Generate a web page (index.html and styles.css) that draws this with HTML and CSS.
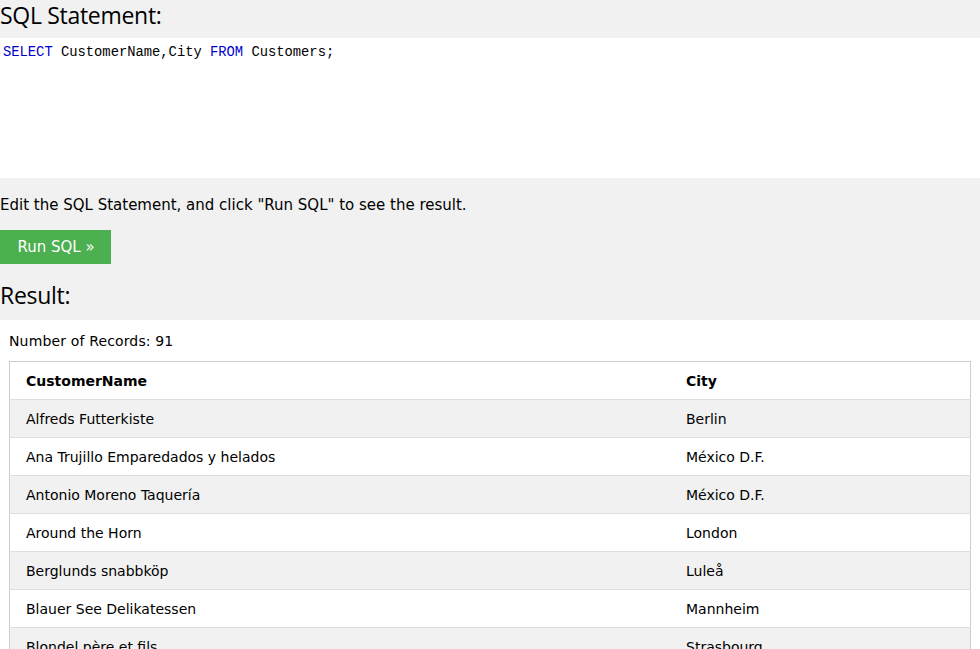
FILE: index.html
```html
<!DOCTYPE html>
<html>
<head>
<meta charset="utf-8">
<link rel="stylesheet" href="styles.css">
</head>
<body>
<div class="page">
  <h2 class="heading">SQL Statement:</h2>
  <div class="editor"><span class="kw">SELECT</span> CustomerName,City <span class="kw">FROM</span> Customers;</div>
  <p class="hint">Edit the SQL Statement, and click "Run SQL" to see the result.</p>
  <div class="btnrow"><button class="run">Run SQL »</button></div>
  <h2 class="heading result-h">Result:</h2>
  <div class="result">
    <div class="count">Number of Records: 91</div>
    <table class="tbl">
      <tr><th>CustomerName</th><th>City</th></tr>
      <tr><td>Alfreds Futterkiste</td><td>Berlin</td></tr>
      <tr><td>Ana Trujillo Emparedados y helados</td><td>México D.F.</td></tr>
      <tr><td>Antonio Moreno Taquería</td><td>México D.F.</td></tr>
      <tr><td>Around the Horn</td><td>London</td></tr>
      <tr><td>Berglunds snabbköp</td><td>Luleå</td></tr>
      <tr><td>Blauer See Delikatessen</td><td>Mannheim</td></tr>
      <tr><td>Blondel père et fils</td><td>Strasbourg</td></tr>
    </table>
  </div>
</div>
</body>
</html>
```
FILE: styles.css
```css
html, body {
  margin: 0;
  padding: 0;
  background: #f1f1f1;
  overflow: hidden;
}
.page {
  font-family: "DejaVu Sans", Verdana, sans-serif;
  font-size: 15px;
  color: #000;
}
.heading {
  margin: 0;
  height: 38px;
  font-family: "Open Sans", "Noto Sans", sans-serif;
  font-weight: 400;
  font-size: 23px;
  line-height: 30px;
  letter-spacing: -0.3px;
}
.editor {
  background: #fff;
  height: 140px;
  box-sizing: border-box;
  padding: 6px 3px;
  font-family: "Liberation Mono", monospace;
  font-size: 13.8px;
  line-height: 18px;
  color: #000;
  white-space: pre;
}
.kw { color: mediumblue; }
.hint {
  margin: 0;
  padding-top: 16px;
  height: 52px;
  box-sizing: border-box;
  line-height: 22px;
}
.btnrow { height: 50px; }
.run {
  display: block;
  border: 0;
  margin: 0;
  height: 34px;
  width: 111px;
  background: #4CAF50;
  color: #fff;
  font-family: "DejaVu Sans", Verdana, sans-serif;
  font-size: 15px;
  padding: 0 0 0 1px;
  text-align: center;
}
.result-h { height: 40px; }
.result {
  background: #fff;
  padding: 10px 9px 0 9px;
  height: 400px;
}
.count {
  font-size: 14px;
  letter-spacing: 0.15px;
  line-height: 22px;
  margin-bottom: 9px;
}
.tbl {
  width: 100%;
  border-collapse: collapse;
  border: 1px solid #ccc;
  font-size: 14px;
}
.tbl th, .tbl td {
  text-align: left;
  padding: 9px 8px 7px 8px;
  line-height: 21px;
  border-bottom: 1px solid #ddd;
  vertical-align: top;
}
.tbl th:first-child, .tbl td:first-child { padding-left: 16px; width: 644px; }
.tbl tr:nth-child(even) { background: #f1f1f1; }
.tbl th { font-weight: bold; }
```
